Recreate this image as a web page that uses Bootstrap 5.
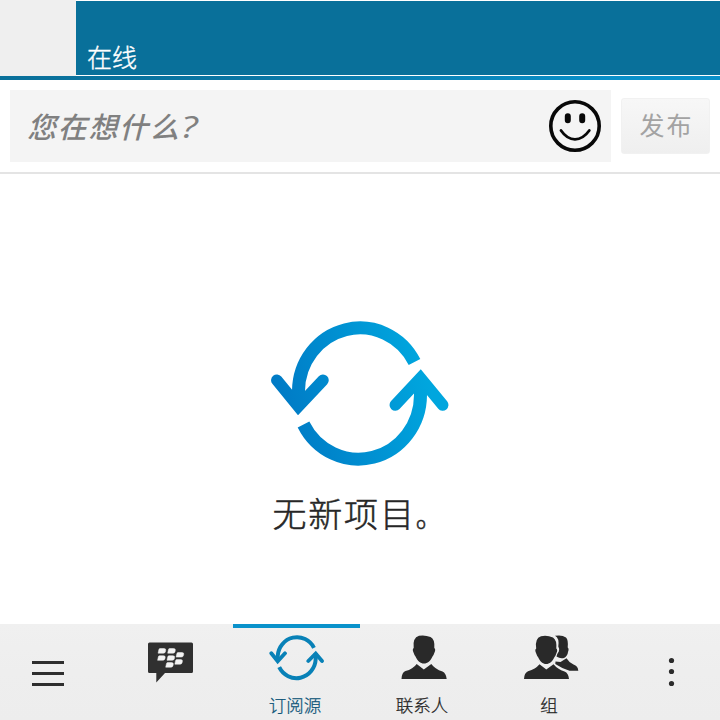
<!DOCTYPE html>
<html lang="zh-CN">
<head>
<meta charset="utf-8">
<meta name="viewport" content="width=device-width, initial-scale=1">
<title>订阅源</title>
<link href="https://cdn.jsdelivr.net/npm/bootstrap@5.3.0/dist/css/bootstrap.min.css" rel="stylesheet">
<style>
body{font-family:"Noto Sans","Noto Sans CJK SC",sans-serif;color:#262626;background:#fff}
.app{width:720px;height:720px}
.app svg{display:block;flex:none}
.profile{height:76px}
.avatar{width:76px;background:#efefef}
.status-box{margin:1px 0;background:#09709a;padding-left:11px;font-size:25px;font-weight:300;line-height:35px;-webkit-text-stroke:.4px}
.stripe{height:4px;background:linear-gradient(90deg,#09709a,#0b76a4 35%,#0a90c9 85%)}
.composer{height:94px;padding:10px 10px 10px;gap:10px;border-bottom:2px solid #e4e4e4}
.field{height:72px;background:#f4f4f4;padding:0 9px 0 17px}
.prompt{font-family:"Noto Sans CJK SC",sans-serif;font-size:29px;line-height:40px;letter-spacing:1.7px;font-style:italic;font-weight:500;color:#808080;margin-top:-3px}
.prompt .latin{display:inline-block;font-family:"Open Sans","Noto Sans",sans-serif;font-size:31px;line-height:36px;transform:scaleX(1.25);transform-origin:left}
.post{width:89px;height:56px;border:1px solid #f1f1f1;border-radius:3px;background:linear-gradient(#f7f7f7,#efefef);color:#a3a3a3;font-size:25px;letter-spacing:1.9px;line-height:32px}
.post span{display:block;margin:-3px 0 0 2px}
.feed{padding-top:147px}
.empty-text{font-size:34px;font-weight:300;line-height:44px;letter-spacing:1.8px;margin:25px 0 0 -3px;-webkit-text-stroke:.5px}
.empty-text .stop{font-size:27px}
.tabs{height:96px;background:linear-gradient(#f0f0f0,#eeeeee 50%,#ededed)}
.side{width:96px}
.tab-item{width:127px;border-top:4px solid transparent;font-size:17.5px;font-weight:300;line-height:24px;color:#222;-webkit-text-stroke:.25px}
.tab-item.active{border-color:#0a92cb;color:#0d5478}
.tab-item svg{margin-top:6px}
.tab-item span{margin-top:9px;margin-right:3px}
</style>
</head>
<body>
<svg width="0" height="0" class="position-absolute" aria-hidden="true">
<defs>
<linearGradient id="blue" gradientUnits="userSpaceOnUse" x1="280" y1="410" x2="425" y2="370"><stop offset="0" stop-color="#007ac5"/><stop offset="1" stop-color="#00a6de"/></linearGradient>
</defs>
</svg>
<main class="app d-flex flex-column overflow-hidden">
<header class="profile d-flex">
<div class="avatar"></div>
<div class="status-box flex-grow-1 d-flex align-items-end text-white"><span>在线</span></div>
</header>
<div class="stripe"></div>
<section class="composer d-flex align-items-center">
<div class="field flex-grow-1 d-flex align-items-center justify-content-between">
<span class="prompt">您在想什么<span class="latin">?</span></span>
<svg width="54" height="54" viewBox="0 0 54 54" fill="none" stroke="#080808"><circle cx="27" cy="27" r="24.2" stroke-width="3.6"/><path d="M19.800 17.300v4M34.200 17.300v4" stroke-width="6" stroke-linecap="round"/><path d="M13 31.500Q19 40.300 27 40.300T41.300 31.500" stroke-width="2.800" stroke-linecap="round"/></svg>
</div>
<button class="post btn p-0" type="button"><span>发布</span></button>
</section>
<section class="feed flex-grow-1 d-flex flex-column align-items-center">
<svg width="180" height="146" viewBox="270 321 180 146" fill="none" stroke="url(#blue)" stroke-width="13"><path d="M414.500 362A61.500 63.500 0 0 0 298.500 391V403M303.500 424.500A62 64.300 0 0 0 420.500 395V381"/><path d="M276.800 380.200L298.300 406.500L323 380.200M395.300 405L420.500 378L442.700 405" stroke-width="11.500" stroke-linecap="round"/></svg>
<div class="empty-text">无新项目<span class="stop">。</span></div>
</section>
<nav class="tabs d-flex justify-content-between">
<div class="side d-flex justify-content-center"><svg width="32" height="96" viewBox="0 0 32 96"><path d="M0 38.500h32M0 49.500h32M0 60.500h32" stroke="#2e2e2e" stroke-width="3"/></svg></div>
<div class="d-flex">
<div class="tab-item d-flex flex-column align-items-center">
<svg width="56" height="50" viewBox="142 634 56 50"><path fill="#303030" d="M149.500 642.500H191.500Q193 642.500 193 644V671.500Q193 673 191.500 673H165L156.300 682.500V673H149.500Q148 673 148 671.500V644Q148 642.500 149.500 642.500Z"/><path fill="#f3f3f3" stroke="#f3f3f3" stroke-width=".5" d="M160 648.500h4q2.200 0 1.700 2l-.4 1.500q-.4 1.200-2 1.200h-5.200l.7-3.400q.3-1.300 1.200-1.300zm9.600 0h4q2.200 0 1.700 2l-.4 1.500q-.4 1.200-2 1.200h-5.200l.7-3.400q.3-1.300 1.200-1.300zM159.500 655.700h4q2.200 0 1.700 2l-.4 1.300q-.4 1.300-2 1.300h-5.200l.7-3.300q.3-1.300 1.200-1.300zm9.400 0h4q2.200 0 1.700 2l-.4 1.300q-.4 1.300-2 1.300h-5.200l.7-3.300q.3-1.300 1.200-1.300zM178 652.500h4q2.200 0 1.700 2l-.4 1.300q-.4 1.300-2 1.300h-5.200l.7-3.300q.3-1.300 1.200-1.300zM176.700 659.600h4q2.200 0 1.700 2l-.4 1.300q-.4 1.300-2 1.300h-5.200l.7-3.300q.3-1.300 1.200-1.300zM167.600 662.600h4q2.200 0 1.700 2l-.4 1.300q-.4 1.300-2 1.300h-5.200l.7-3.300q.3-1.300 1.200-1.300z"/></svg>
</div>
<div class="tab-item active d-flex flex-column align-items-center">
<svg width="56" height="50" viewBox="269 634 56 50" fill="none" stroke="#0881b7" stroke-width="4"><path d="M314 647.800A19.300 20 0 0 0 277.700 656V661M279.200 667.200A19.300 20 0 0 0 315.700 659V653"/><path d="M271.300 653.300L277.700 661.300L285 653.300M308.300 661L315.700 653.500L322 661" stroke-width="3.800" stroke-linecap="round"/></svg>
<span>订阅源</span>
</div>
<div class="tab-item d-flex flex-column align-items-center">
<svg width="56" height="50" viewBox="396 634 56 50" fill="#292929"><path d="M419 635.800Q425 634.800 430.500 637Q435 639 434.300 648Q436 649 434.500 652.500Q433.500 655.500 432.500 656.500C430.500 661 427.500 663.500 424 663.500S417.500 661 415.500 656.500Q414.500 655.500 413.500 652.500Q412 649 413.700 648Q412.300 638 419 635.800Z"/><path d="M401.500 679Q401.700 672.500 405.500 671Q413 669.200 416.700 664L423.800 669.500L431.300 664Q435 669.200 442.500 671.500Q446 673 446.700 679Z"/></svg>
<span>联系人</span>
</div>
<div class="tab-item d-flex flex-column align-items-center">
<svg width="56" height="50" viewBox="523 634 56 50" fill="#292929"><path d="M555 635.800Q562 634.500 566 637.500Q568.500 640 567.700 647.500Q569.300 648.500 568 652Q567.500 656 564 658Q560 659 556.500 656.500Q557.500 653 558.800 651.500Q559.500 648 558.300 646.500Q559.500 638 555 635.800ZM555.500 661.500L560.500 662L566.500 658.300Q568.500 662 573.500 664.500Q578 666 578.300 670.800H569.500Q562 668.500 555.300 664Z"/><path d="M541 636.300Q547 635 553 637.500Q557 640 556.300 648.500Q558 649.500 556.500 653Q555.500 656 554.500 657C552.500 661.500 549.500 664 546.200 664S540 661.500 538 657Q537 656 536 653Q534.500 649.500 536.200 648.500Q534.500 638.500 541 636.300ZM524 679Q524.200 673 528 671.200Q535.500 669.200 539.500 664.300L546.300 669.500L553.500 664.300Q557.500 669.200 564.500 671.500Q568.500 673 569 679Z"/></svg>
<span>组</span>
</div>
</div>
<div class="side d-flex justify-content-center"><svg width="10" height="96" viewBox="0 0 10 96" fill="#2b2b2b"><circle cx="4.500" cy="36.500" r="2.600"/><circle cx="4.500" cy="47.500" r="2.600"/><circle cx="4.500" cy="59.500" r="2.600"/></svg></div>
</nav>
</main>
<script src="https://cdn.jsdelivr.net/npm/bootstrap@5.3.0/dist/js/bootstrap.bundle.min.js"></script>
</body>
</html>
